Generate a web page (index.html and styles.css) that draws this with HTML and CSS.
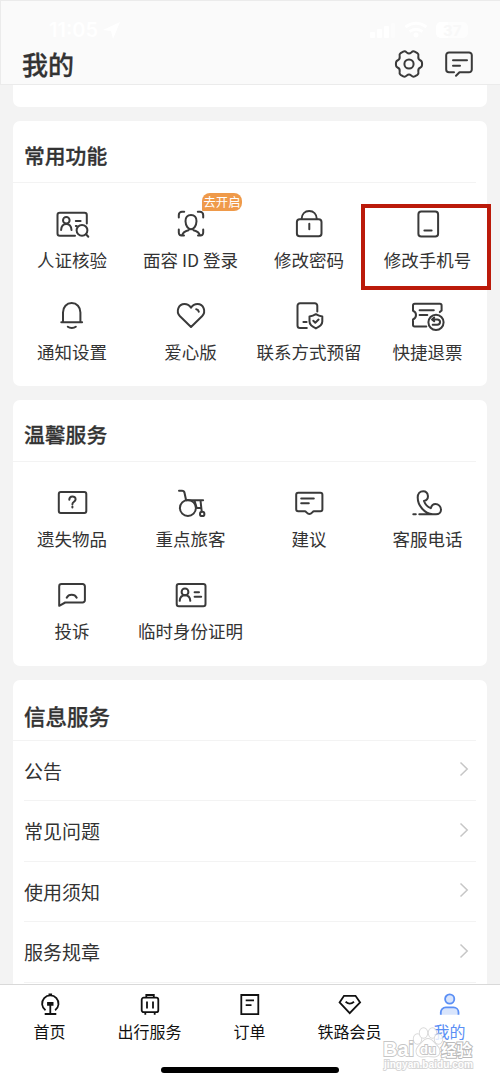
FILE: index.html
```html
<!DOCTYPE html>
<html lang="zh-CN">
<head>
<meta charset="utf-8">
<title>我的</title>
<link rel="stylesheet" href="styles.css">
</head>
<body>
<div class="screen">
  <header class="header">
    <div class="status">
      <div class="clock">11:05
        <svg width="17" height="17" viewBox="0 0 17 17"><path d="M0 8 17 0 10 17 8 9z" fill="#fff"/></svg>
      </div>
      <svg class="signals" width="102" height="18" viewBox="0 0 102 18">
        <g fill="#fff"><rect x="0" y="11" width="5" height="6" rx="1"/><rect x="7" y="8" width="5" height="9" rx="1"/><rect x="14" y="5" width="5" height="12" rx="1"/><rect x="21" y="2" width="4" height="15" rx="1" opacity=".4"/><rect x="66" y="1" width="32" height="16" rx="5" opacity=".6"/><path d="M71 1h7v16h-7a5 5 0 0 1-5-5V6a5 5 0 0 1 5-5z"/></g>
        <g fill="none" stroke="#fff" stroke-width="3"><path d="M35.500 6Q46-1.500 56.500 6M39.500 10.500Q46 6 52.500 10.500"/></g>
        <circle cx="46" cy="14" r="2.500" fill="#fff"/>
        <text x="73" y="15" class="battery">37</text>
      </svg>
    </div>
    <div class="titlebar">
      <h1>我的</h1>
      <div class="actions">
        <svg class="ic" width="30" height="30" viewBox="0 0 30 30"><path d="M9.300 2.600c1.800-1 2.600 0 3.500.9 1.200 1 3.200 1 4.400 0 .9-.9 1.700-1.900 3.500-.9l2.700 1.600c1.600 1 1.200 2.200.9 3.500-.2 1.700.7 3.200 2.200 3.800 1.300.5 1.600 1.500 1.600 3.500s-.3 3-1.600 3.500c-1.500.6-2.400 2.100-2.200 3.800.3 1.300.7 2.500-.9 3.500l-2.700 1.600c-1.800 1-2.600 0-3.500-.9-1.200-1-3.200-1-4.400 0-.9.9-1.700 1.900-3.500.9l-2.700-1.600c-1.600-1-1.200-2.200-.9-3.500.2-1.700-.7-3.200-2.200-3.800-1.300-.5-1.600-1.500-1.600-3.500s.3-3 1.600-3.500c1.500-.6 2.400-2.100 2.200-3.800-.3-1.300-.7-2.500.9-3.500z"/><circle cx="15" cy="15" r="4.600"/></svg>
        <svg class="ic" width="30" height="30" viewBox="0 0 30 30"><path d="M10 23.300H5a2.800 2.800 0 0 1-2.800-2.800V6.300A2.800 2.800 0 0 1 5 3.500h20a2.800 2.800 0 0 1 2.800 2.800v14.200a2.800 2.800 0 0 1-2.800 2.800h-9.500l-3.500 3.500M9 11.300h14M9 16.700h7"/></svg>
      </div>
    </div>
  </header>

  <main class="content">
    <section class="card card-tail"></section>

    <section class="card">
      <h2>常用功能</h2>
      <div class="grid">
        <div class="item"><svg class="ic" width="40" height="32" viewBox="0 0 40 32"><path d="M23 27.700H7.800a2.300 2.300 0 0 1-2.300-2.300V7a2.300 2.300 0 0 1 2.300-2.300h24.700A2.300 2.300 0 0 1 34.800 7v8.500M23.800 13h4.800M23.800 18h.9"/><circle cx="14.300" cy="12.300" r="3.300"/><path d="M9.100 22c.3-4 2.300-6 5.200-6s4.900 2 5.200 6"/><circle cx="30" cy="22.300" r="5.400"/><path d="m34 26.300 2.300 2.500"/></svg><span>人证核验</span></div>
        <div class="item"><svg class="ic" width="40" height="32" viewBox="0 0 40 32"><path d="M7.800 9.500V7A3.200 3.200 0 0 1 11 3.800h2.200M26.800 3.800H29A3.200 3.200 0 0 1 32.200 7v2.500M7.800 21.500v3c0 2.200 1.200 3.300 3.500 2.700.4-3.200 3-4.200 6.200-5M32.200 21.500v3c0 2.200-1.200 3.300-3.500 2.700-.4-3.200-3-4.200-6.200-5M10 27.400h3M27 27.400h3"/><path d="M20 7c3.500 0 5.700 2.400 5.500 6.200-.2 4.400-2.400 8-5.500 8s-5.300-3.600-5.500-8C14.300 9.400 16.500 7 20 7z"/></svg><i class="badge">去开启</i><span>面容 ID 登录</span></div>
        <div class="item"><svg class="ic" width="40" height="32" viewBox="0 0 40 32"><rect x="7.900" y="11.200" width="24.600" height="17" rx="2.800"/><path d="M12.600 11C12.800 6 16 3.100 20.200 3.100S27.600 6 27.800 11M20.300 15.800v5.400"/></svg><span>修改密码</span></div>
        <div class="item"><svg class="ic" width="40" height="32" viewBox="0 0 40 32"><rect x="10.400" y="3.600" width="19.700" height="24.900" rx="2.800"/><path d="M16.400 22.400h7.200"/></svg><span>修改手机号</span><b class="highlight"></b></div>
        <div class="item"><svg class="ic" width="40" height="32" viewBox="0 0 40 32"><path d="M11 22V12.500C11 7 14.600 3.100 19.700 3.100s8.700 3.900 8.700 9.400V22M9.300 22.300h20.800M15.800 26.700c2 1.600 6 1.600 8 0"/></svg><span>通知设置</span></div>
        <div class="item"><svg class="ic" width="40" height="32" viewBox="0 0 40 32"><path d="M20 27 9 16.300C4.500 11.500 7.500 4 13.500 4c3 0 5 1.500 6.500 3.700C21.500 5.500 23.500 4 26.500 4c6 0 9 7.500 4.500 12.300zM25.200 9.200c1.500.2 2.300 1 2.600 2.500"/></svg><span>爱心版</span></div>
        <div class="item"><svg class="ic" width="40" height="32" viewBox="0 0 40 32"><path d="M17.800 27.900H11A2.500 2.500 0 0 1 8.500 25.400V5.700A2.500 2.500 0 0 1 11 3.200h14.800a2.500 2.500 0 0 1 2.500 2.500v5.800M14.400 22h3.200"/><path d="M26.900 14.200c2 1.300 4 2 6.400 2.300v5.100c0 3-2.300 5-6.400 6.800-4.100-1.800-6.400-3.800-6.400-6.800v-5.100c2.400-.3 4.400-1 6.400-2.300zM24.300 20.700l2 2 3.300-3.100"/></svg><span>联系方式预留</span></div>
        <div class="item"><svg class="ic" width="40" height="32" viewBox="0 0 40 32"><path d="M18.300 26.400H6.500c-1 0-1.500-.6-1.500-1.600v-5.300c4-1.600 4-7.200 0-8.800V5.400c0-1 .7-1.700 1.700-1.700h25.200c1 0 1.700.7 1.700 1.700v5l-1.800 1.700M11.600 10.200h14.200M11.600 15h7.700"/><circle cx="28" cy="22.300" r="7.600"/><path d="m26.200 17.500-2.200 1.900 2.200 1.900M24 19.400h5.200c3.800 0 3.800 5.300 0 5.300h-4.500"/></svg><span>快捷退票</span></div>
      </div>
    </section>

    <section class="card">
      <h2>温馨服务</h2>
      <div class="grid">
        <div class="item"><svg class="ic" width="40" height="32" viewBox="0 0 40 32"><rect x="6.800" y="5.100" width="27.500" height="21" rx="2"/><path d="M17.300 12.800c0-4.400 6.300-4.200 6.300-.6 0 2.600-3.200 2.400-3.200 5M20.400 19.600v1"/></svg><span>遗失物品</span></div>
        <div class="item"><svg class="ic" width="40" height="32" viewBox="0 0 40 32"><path d="M8 3.700h3c1.500 0 2.200.5 2.500 2l1.600 7.500h17M23.500 13.500l2.200 7.500h3.200M29.500 13.500l1.200 11"/><circle cx="16.900" cy="21" r="8"/><circle cx="31.200" cy="26.900" r="2.200"/></svg><span>重点旅客</span></div>
        <div class="item"><svg class="ic" width="40" height="32" viewBox="0 0 40 32"><path d="M9.200 5.800h22.200a2 2 0 0 1 2 2v14.400a2 2 0 0 1-2 2h-6.500c-1.300 0-2.200 2.900-4.500 2.900s-3.200-2.900-4.500-2.900H9.200a2 2 0 0 1-2-2V7.800a2 2 0 0 1 2-2zM12.200 11.400h12.600M12.200 16.200h7.600"/></svg><span>建议</span></div>
        <div class="item"><svg class="ic" width="40" height="32" viewBox="0 0 40 32"><path d="M5.300 27.300h2.500M11.300 27.300H28c3 0 5-2 5-4.600 0-3.300-2.600-5.700-5.600-5.700-2.300 0-3.700 1-4.600 4.200-3.300-1.400-5.600-3.600-6.800-7.200 3.300-.8 4.200-2.200 3.900-5.200-.3-2.800-2-4.600-4.700-4.600-3.300 0-5.500 2.700-5.500 6.300 0 8 6.500 15.800 15 16.800"/></svg><span>客服电话</span></div>
        <div class="item"><svg class="ic" width="40" height="32" viewBox="0 0 40 32"><path d="M7.200 26.800V7.400a2.300 2.300 0 0 1 2.300-2.300h21.100a2.300 2.300 0 0 1 2.300 2.300v13.800a2.300 2.300 0 0 1-2.300 2.300H13.200zM14.700 18.700c2-3.800 8-3.800 10 0"/></svg><span>投诉</span></div>
        <div class="item"><svg class="ic" width="40" height="32" viewBox="0 0 40 32"><rect x="5.700" y="4.900" width="28.800" height="22.400" rx="2.200"/><circle cx="14" cy="12.900" r="3.400"/><path d="M8.700 21.800c.3-3.600 2.300-5.500 5.300-5.500s5 1.900 5.300 5.500M23.600 13.200h4.400M23.600 17.800h6.600"/></svg><span>临时身份证明</span></div>
      </div>
    </section>

    <section class="card card-list">
      <h2>信息服务</h2>
      <ul>
        <li><span>公告</span><svg width="10" height="16" viewBox="0 0 10 16"><path d="m1.500 1.500 6.700 6.500-6.700 6.500"/></svg></li>
        <li><span>常见问题</span><svg width="10" height="16" viewBox="0 0 10 16"><path d="m1.500 1.500 6.700 6.500-6.700 6.500"/></svg></li>
        <li><span>使用须知</span><svg width="10" height="16" viewBox="0 0 10 16"><path d="m1.500 1.500 6.700 6.500-6.700 6.500"/></svg></li>
        <li><span>服务规章</span><svg width="10" height="16" viewBox="0 0 10 16"><path d="m1.500 1.500 6.700 6.500-6.700 6.500"/></svg></li>
      </ul>
    </section>
  </main>

  <footer class="footer">
    <nav class="tabs">
      <div class="tab"><svg width="28" height="24" viewBox="0 0 28 24"><path d="M9.500 18.300a8.200 8.200 0 1 1 9.600 0M14.300 12v10M8.700 22h11.600M12.500 2.500h3.600"/><path d="M12 11h4.600v1.800H12z" fill="currentColor"/></svg><span>首页</span></div>
      <div class="tab"><svg width="28" height="24" viewBox="0 0 28 24"><rect x="5.700" y="5.700" width="16.600" height="14.500" rx="2"/><path d="M10.300 5.500V3h7.500v2.500M11 9.500v7M17 9.500v7M9.300 20.500v2.200M18.700 20.500v2.200"/></svg><span>出行服务</span></div>
      <div class="tab"><svg width="28" height="24" viewBox="0 0 28 24"><path d="M5.300 3h17v19.200h-17zM9.700 8.400h8.300M9.700 13.200h5.800"/></svg><span>订单</span></div>
      <div class="tab"><svg width="28" height="24" viewBox="0 0 28 24"><path d="M8 3.800h11.500l4.600 6.600-10.400 10.700L3.600 10.400zM9.600 9.800c2.600 2.200 5.800 2.200 8.400 0"/></svg><span>铁路会员</span></div>
      <div class="tab active"><svg width="28" height="24" viewBox="0 0 28 24"><circle cx="13.700" cy="7" r="4.600" fill="#d9e5fc"/><path d="M4.800 22.700v-2.400a5 5 0 0 1 5-5h7.700a5 5 0 0 1 5 5v2.400" fill="#d9e5fc"/></svg><span>我的</span></div>
    </nav>
    <div class="home-bar"></div>
    <div class="watermark">
      <svg width="96" height="48" viewBox="0 0 96 48">
        <g class="wm-shape"><ellipse cx="36.500" cy="16" rx="3.800" ry="4.800"/><ellipse cx="42.500" cy="10" rx="3.800" ry="4.800"/><ellipse cx="51.500" cy="10" rx="3.800" ry="4.800"/><ellipse cx="57.500" cy="16" rx="3.800" ry="4.800"/><path d="M47 16c4 0 6 4 9 7 5 5 2 11-3 10.500-4-.5-8-.5-12 0-5 .5-8-5.500-3-10.500 3-3 5-7 9-7z"/></g>
        <text x="2" y="33" class="wm-big" textLength="31" lengthAdjust="spacingAndGlyphs">Bai</text>
        <text x="39" y="31" class="wm-du">du</text>
        <text x="60" y="33" class="wm-cn">经验</text>
        <text x="3" y="45" class="wm-url" textLength="89" lengthAdjust="spacingAndGlyphs">jingyan.baidu.com</text>
      </svg>
    </div>
  </footer>
</div>
</body>
</html>
```
FILE: styles.css
```css
* { box-sizing: border-box; }

body {
  margin: 0;
  background: #f3f3f3;
  color: #333;
  font-family: "Noto Sans CJK SC", sans-serif;
}

h1, h2, ul { margin: 0; padding: 0; }

h1, h2 { -webkit-text-stroke: .3px #333; }

.screen {
  width: 500px;
  height: 1082px;
  overflow: hidden;
  display: flex;
  flex-direction: column;
}

.header {
  height: 85px;
  flex: none;
  background: #fafafa;
  border: 1px solid #ebebeb;
  border-right: 0;
  padding-top: 19px;
}

.status {
  display: flex;
  justify-content: space-between;
  align-items: center;
  height: 20px;
  padding: 0 28px 0 48px;
}

.clock {
  display: flex;
  align-items: center;
  gap: 5px;
  color: #fff;
  font: 600 20px/20px Inter, sans-serif;
}

.battery { font: 700 15px Inter, sans-serif; fill: #f8f8f8; }

.titlebar {
  display: flex;
  justify-content: space-between;
  align-items: center;
  height: 48px;
  padding: 0 26px 0 21px;
}

.titlebar h1 { font-size: 26px; line-height: 36px; font-weight: 500; }

.actions { display: flex; gap: 20px; }

.ic {
  display: block;
  fill: none;
  stroke: #3a3a3a;
  stroke-width: 2;
  stroke-linecap: round;
  stroke-linejoin: round;
}

.content {
  flex: 1;
  min-height: 0;
  overflow: hidden;
  padding: 0 13px;
  display: flex;
  flex-direction: column;
  gap: 14px;
}

.card {
  flex: none;
  height: 265.500px;
  background: #fff;
  border-radius: 7px;
}

.card-tail { height: 22px; border-radius: 0 0 7px 7px; margin-bottom: -.500px; }

.card h2 {
  height: 62px;
  margin-right: 11px;
  padding: 4px 0 0 11px;
  border-bottom: 1px solid #f3f3f3;
  font-size: 20.800px;
  line-height: 60px;
  font-weight: 500;
}

.grid {
  display: grid;
  grid-template-columns: repeat(4, 1fr);
  row-gap: 28px;
  padding-top: 25px;
}

.item {
  position: relative;
  display: flex;
  flex-direction: column;
  align-items: center;
  gap: 8px;
  font-size: 17.500px;
  line-height: 24px;
  white-space: nowrap;
}

.item span { margin-left: -.500px; }

.badge {
  position: absolute;
  left: 70.500px;
  top: -15px;
  width: 40px;
  height: 18px;
  border-radius: 8px 8px 8px 1px;
  background: #ef9a4a;
  color: #fff;
  font-size: 12.300px;
  line-height: 18px;
  font-style: normal;
  text-align: center;
}

.highlight {
  position: absolute;
  left: -8px;
  top: -3.500px;
  width: 130px;
  height: 86px;
  border: 4px solid #bb1a0a;
}

.card-list { height: 320px; }

.card-list h2 { height: 61px; padding-top: 6px; font-size: 21.500px; }

.card-list ul { list-style: none; padding: 0 11px; }

.card-list li {
  display: flex;
  justify-content: space-between;
  align-items: center;
  height: 60.500px;
  padding-right: 7px;
  border-bottom: 1px solid #f3f3f3;
  font-size: 19px;
}

.card-list svg { fill: none; stroke: #c6c6c6; stroke-width: 1.5; margin-top: -2px; }

.footer {
  position: relative;
  flex: none;
  height: 98px;
  background: #fff;
  border-top: 1px solid #d9d9d9;
  display: flex;
  flex-direction: column;
  align-items: center;
}

.tabs { display: flex; width: 100%; height: 82px; padding-top: 7px; }

.tab {
  flex: 1;
  display: flex;
  flex-direction: column;
  align-items: center;
  gap: 3px;
  color: #111;
  font-size: 16px;
  line-height: 24px;
}

.tab svg { fill: none; stroke: currentColor; stroke-width: 1.8; }

.tab span { margin-left: -1px; }

.tab.active { color: #5b8ff5; }

.home-bar { width: 178px; height: 6px; border-radius: 3px; background: #000; }

.watermark { position: absolute; left: 381px; top: 38px; height: 48px; opacity: .8; }

.watermark text, .wm-shape {
  fill: #fff;
  stroke: #b8b8b8;
  stroke-width: 1.8;
  paint-order: stroke;
}

.watermark .wm-shape { stroke: #d0d0d0; }

.wm-big { font: 700 20px "Liberation Sans", sans-serif; }
.wm-du { font: 700 13px "Liberation Sans", sans-serif; }
.watermark .wm-cn { font: 700 15.500px/16px "Noto Sans CJK SC", sans-serif; stroke: #a8a8a8; }
.watermark .wm-url { font: 700 10.500px "Liberation Sans", sans-serif; stroke: #ccc; }
```
